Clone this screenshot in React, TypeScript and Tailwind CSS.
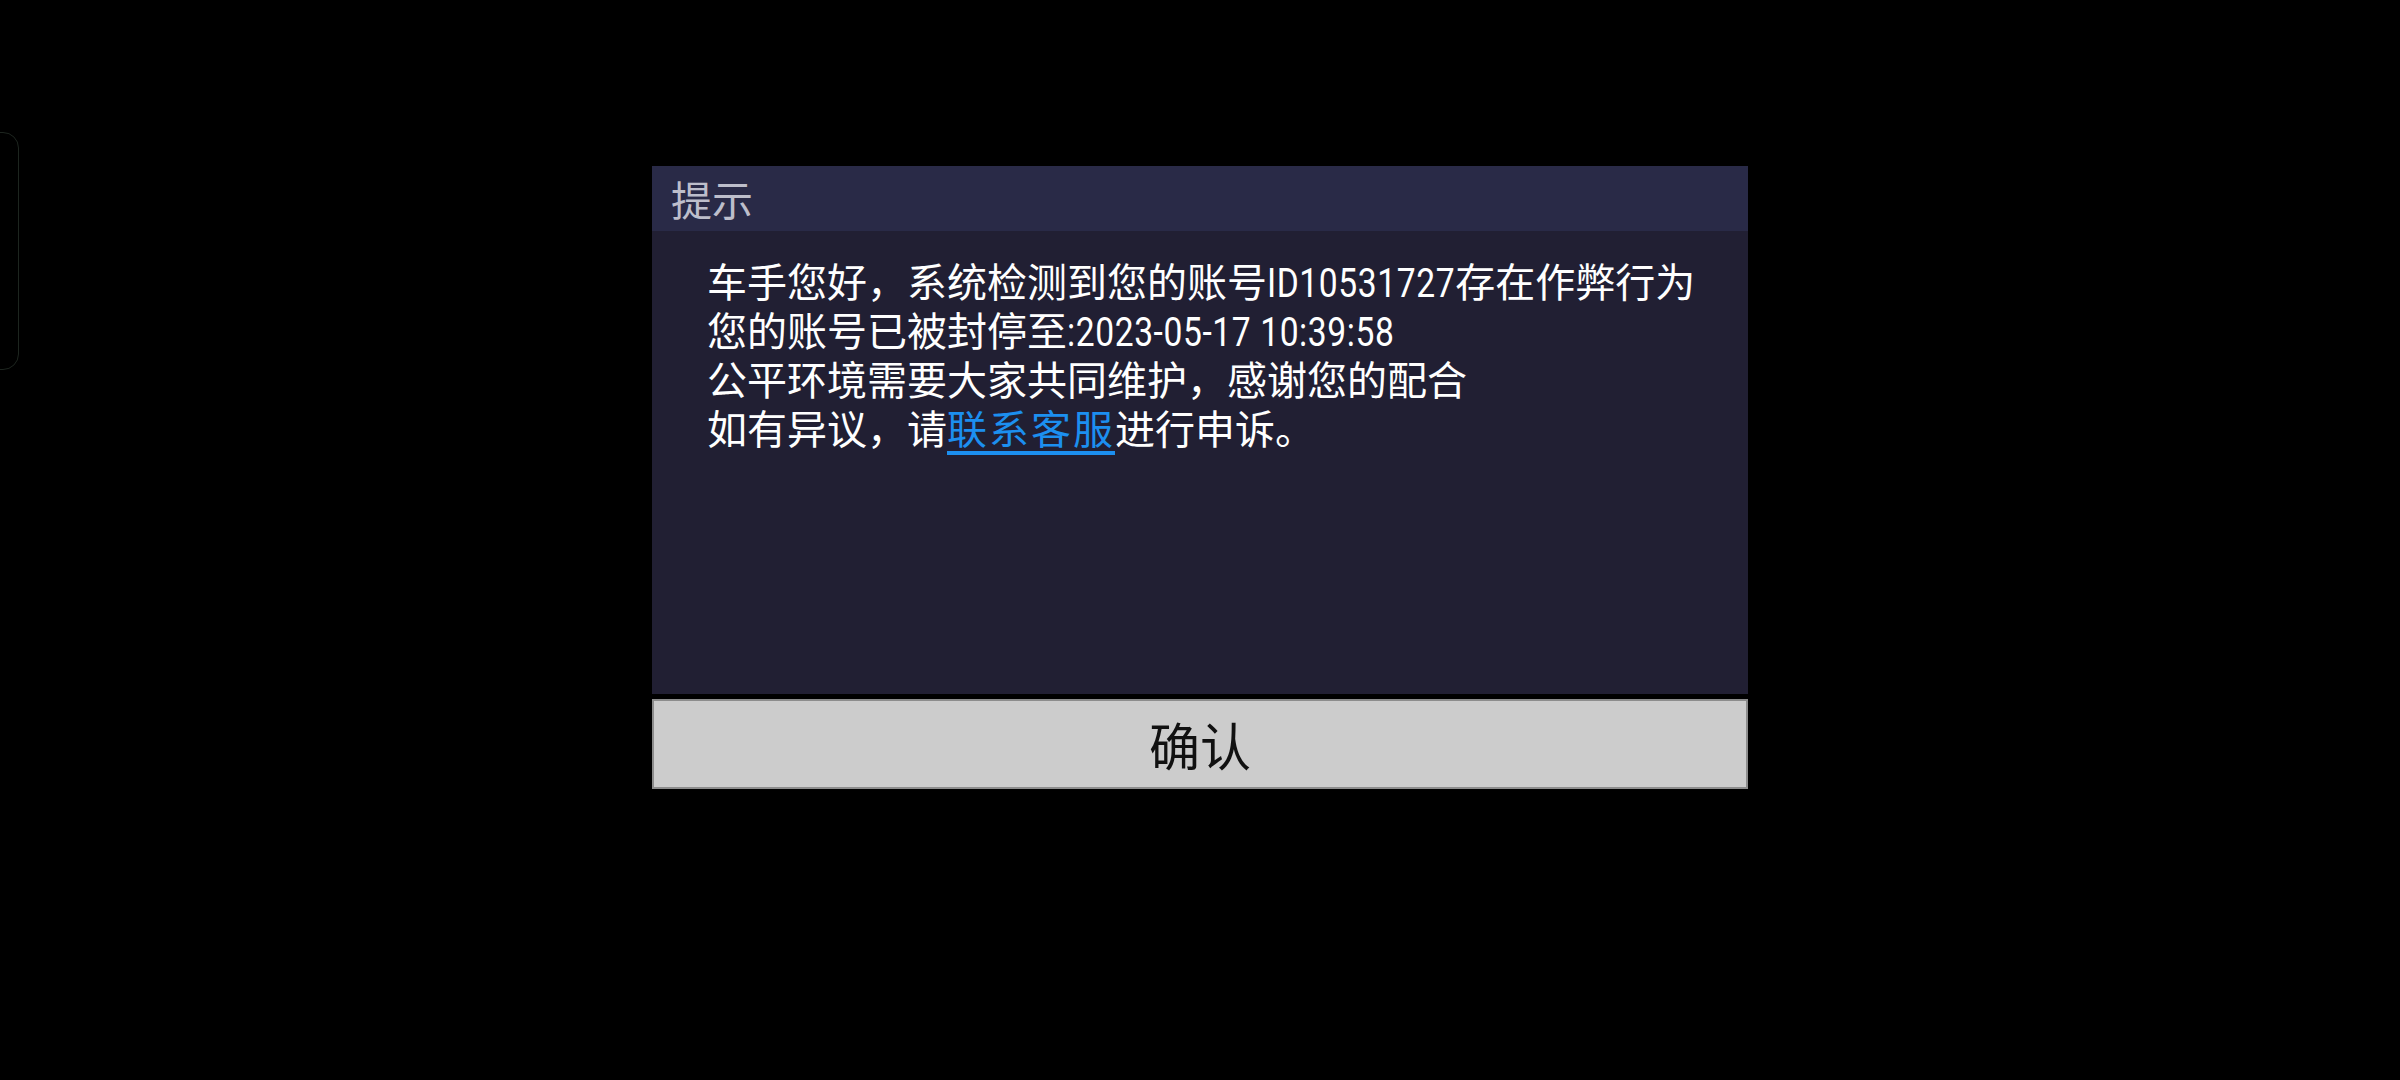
import { useLayoutEffect, useRef } from "react";

// Latin runs in the message use a narrow digit face; squeeze them and give back the saved width
function Narrow({ children }: { children: string }) {
  const ref = useRef<HTMLSpanElement>(null);

  useLayoutEffect(() => {
    const el = ref.current;
    if (!el) return;
    el.style.marginRight = `${-el.offsetWidth * 0.16}px`;
  }, [children]);

  return (
    <span
      ref={ref}
      className="inline-block origin-left scale-x-[0.84] whitespace-pre leading-[40px] tracking-[0.7px]"
      style={{ fontFamily: "Roboto, sans-serif" }}
    >
      {children}
    </span>
  );
}

export default function App() {
  return (
    <div
      className="relative h-[1080px] w-full overflow-hidden bg-black"
      style={{ fontFamily: "'Noto Sans CJK SC', sans-serif" }}
    >
      {/* edge of the side panel peeking in */}
      <div className="absolute left-[-24px] top-[132px] h-[238px] w-[43px] rounded-[16px] border border-[#1d251f]" />

      <div className="flex justify-center pt-[166px]">
        <div className="w-[1096px]">
          {/* title bar */}
          <div className="flex h-[65px] items-center bg-[#292a47] pl-[19px] text-[41px] text-[#bdbecb]">
            提示
          </div>

          {/* message */}
          <div className="h-[463px] bg-[#211f33] pl-[55px] pt-[25px] text-[40px] leading-[49px] text-white">
            <p>
              车手您好，系统检测到您的账号<Narrow>ID10531727</Narrow>存在作弊行为
            </p>
            <p>
              您的账号已被封停至<Narrow>:2023-05-17 10:39:58</Narrow>
            </p>
            <p>公平环境需要大家共同维护，感谢您的配合</p>
            <p>
              如有异议，请
              <span className="tracking-[2px] text-[#1c8ff0] underline decoration-[#1c8ff0] decoration-[4px] underline-offset-[7px]">
                联系客服
              </span>
              进行申诉。
            </p>
          </div>

          {/* confirm */}
          <button className="mt-[5px] flex h-[90px] w-full items-center justify-center border-2 border-[#8c8c8c] bg-[#cccccc] text-[51px] text-[#111]">
            确认
          </button>
        </div>
      </div>
    </div>
  );
}
